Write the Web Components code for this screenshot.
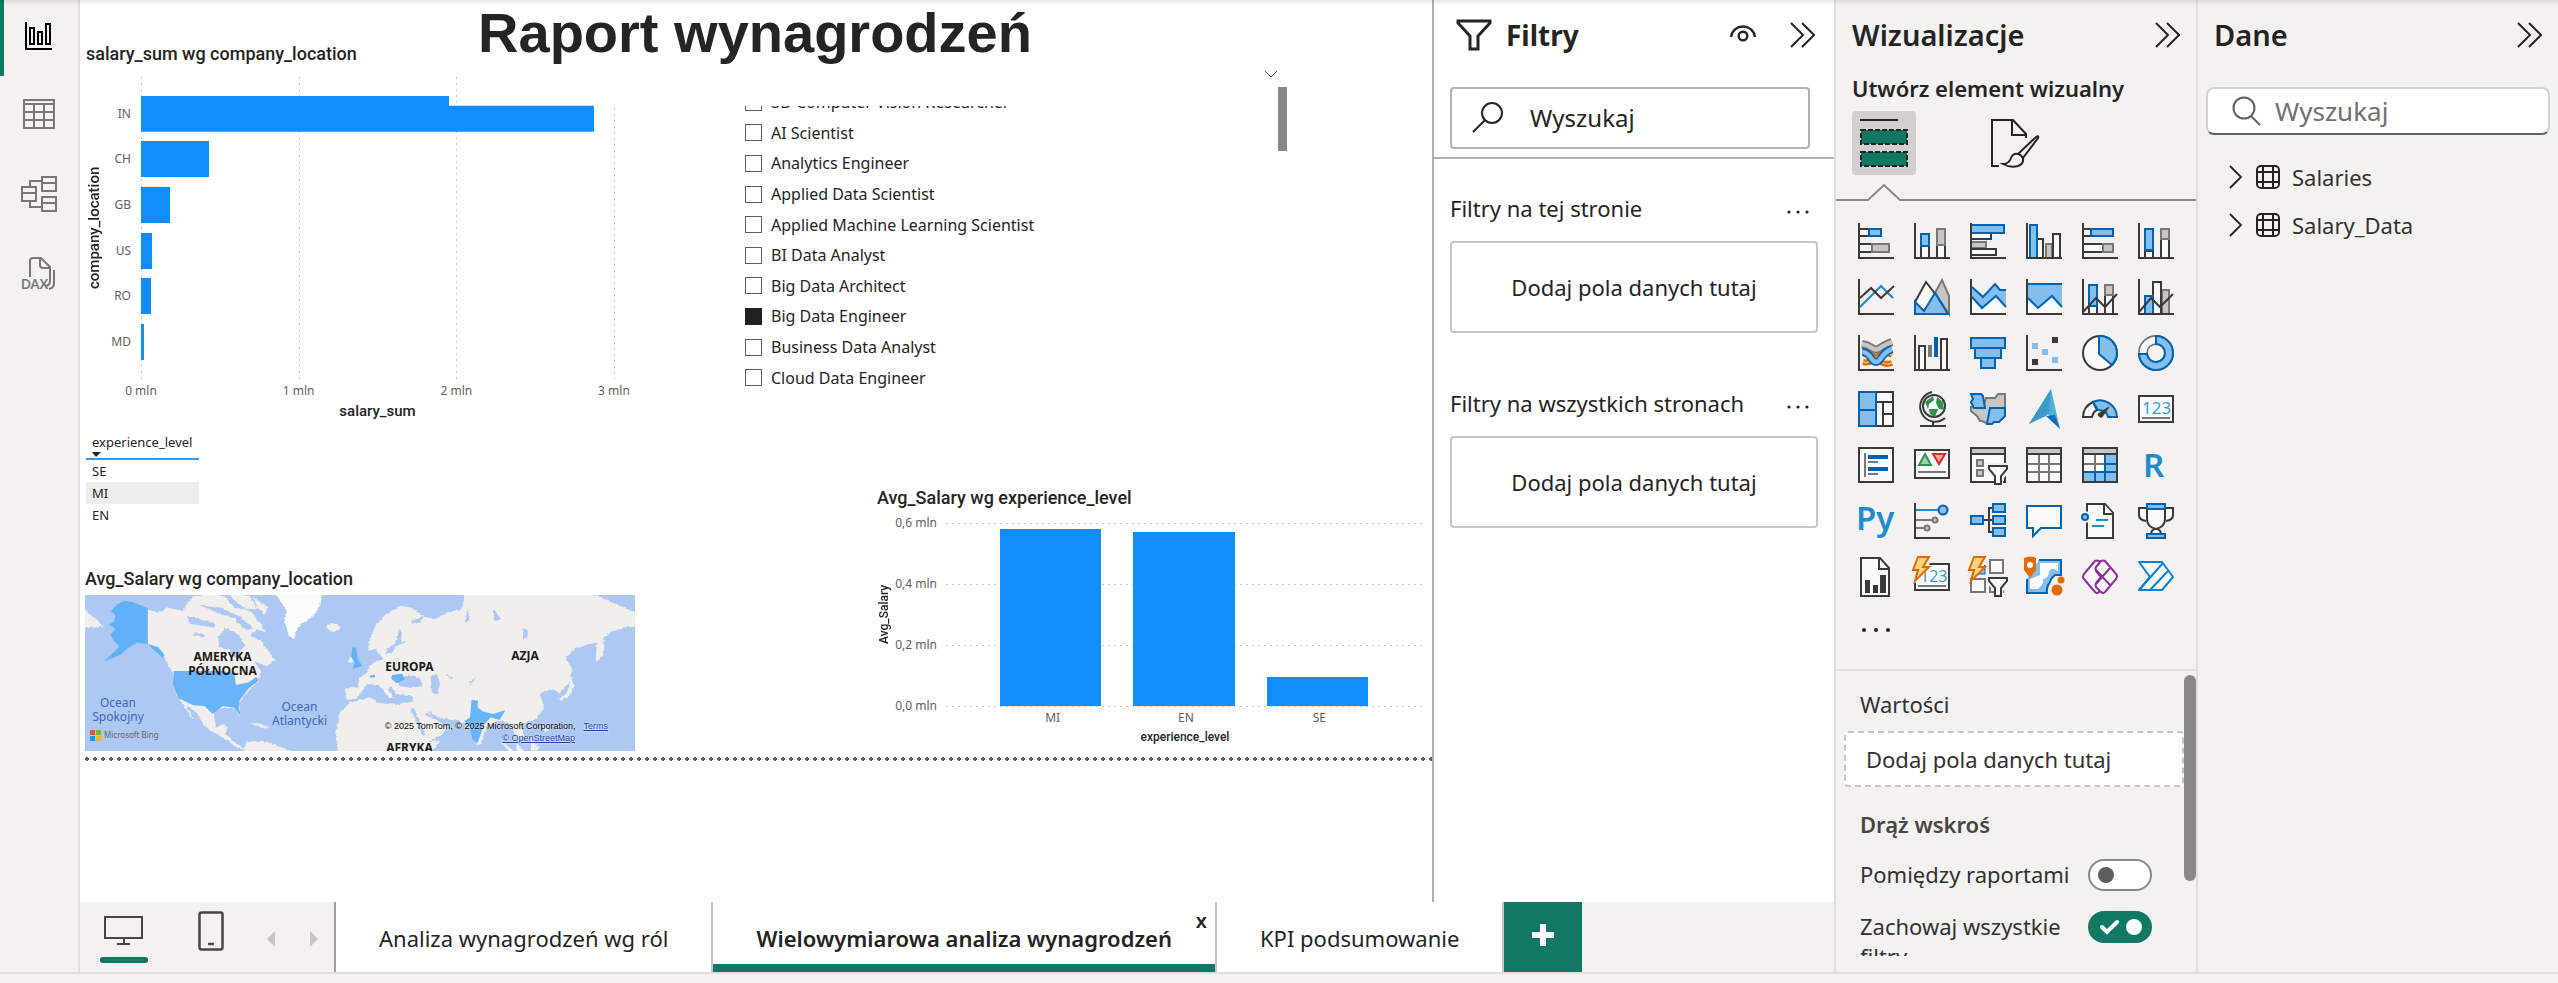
<!DOCTYPE html>
<html lang="pl">
<head>
<meta charset="utf-8">
<title>Raport wynagrodzeń</title>
<style>
html, body { margin: 0; height: 100%; }
body { font: 22px/30px "Noto Sans", "Open Sans", sans-serif; color: #252423; background: #f3f2f1; overflow: hidden; }
</style>
</head>
<body>
<report-app></report-app>
<script>
const BASE = `*, *::before, *::after { box-sizing: border-box; }
h1, h2, h3, p, ul { margin: 0; padding: 0; font-weight: inherit; font-size: inherit; }
ul { list-style: none; }
button { font: inherit; color: inherit; background: none; border: 0; padding: 0; margin: 0; cursor: pointer; display: flex; align-items: center; justify-content: center; }
svg { display: block; }
`;
function define(name, css, html, setup) {
  const template = document.createElement('template');
  customElements.define(name, class extends HTMLElement {
    connectedCallback() {
      if (this.shadowRoot) return;
      template.innerHTML = `<style>${BASE}${css}</style>${typeof html === 'function' ? html(this) : html}`;
      this.attachShadow({ mode: 'open' }).append(template.content.cloneNode(true));
      if (setup) setup(this);
    }
  });
}
const CHEVRONS = `<svg width="26" height="26" viewBox="0 0 26 26" fill="none" stroke="#252423" stroke-width="2"><path d="M2 1l12 12L2 25M13 1l12 12-12 12"/></svg>`;

/* ---------- left rail ---------- */
define('view-rail', `
:host { display: flex; flex-direction: column; width: 80px; border-right: 2px solid #e1dfdd; background: #f3f2f1; }
button { height: 80px; border-left: 4px solid transparent; padding: 0 4px 4px 0; }
button.on { border-color: #117865; height: 76px; }
nav { display: flex; flex-direction: column; }
`, `<nav aria-label="Widoki">
<button class="on" aria-label="Widok raportu"><svg width="28" height="28" viewBox="0 0 28 28" fill="none" stroke="#000" stroke-width="2"><path d="M1 0v27h26M5 6h4v16H5zM13 10h4v12h-4zM21 2h4v20h-4z"/></svg></button>
<button aria-label="Widok tabeli"><svg width="32" height="30" viewBox="0 0 32 30" fill="none" stroke="#797775" stroke-width="2"><path d="M1 1h30v28H1zM1 5h30M1 13h30M1 21h30M11 5v24M21 5v24"/></svg></button>
<button aria-label="Widok modelu"><svg width="36" height="36" viewBox="0 0 36 36" fill="none" stroke="#797775" stroke-width="2"><path d="M1 11h14v14H1zM1 17h14M21 1h14v14H21zM21 7h14M21 21h14v14H21zM21 27h14M9 11V5h12M9 25v6h12"/></svg></button>
<button aria-label="Widok zapytań DAX"><svg width="36" height="34" viewBox="0 0 36 34" fill="none" stroke="#797775" stroke-width="2"><path d="M9 20V4q0-3 3-3h8l9 9v14q0 4-4 5M19 1v7q0 3 3 3h7M33 13v13q0 5-5 6"/><text x="0" y="32" font-family="Lato, sans-serif" font-weight="700" font-size="13" fill="#797775" stroke="none">DAX</text></svg></button>
</nav>`);

/* ---------- bar chart ---------- */
define('bar-chart', `
:host { display: grid; grid-template-columns: 16px 29px 10px minmax(0, 473fr) 22fr; grid-template-rows: 35px 302px 22px 20px; }
h2 { grid-column: 1 / -1; font: 500 18px/24px Roboto, sans-serif; }
.y { writing-mode: vertical-rl; transform: rotate(180deg); text-align: center; font: 500 15px/16px Roboto, sans-serif; }
.cats { display: grid; grid-auto-rows: 1fr; padding: 14px 0; font-size: 12px; line-height: 16px; color: #605e5c; text-align: right; align-items: center; }
.plot { grid-column: 4; display: grid; }
.plot > * { grid-area: 1 / 1; }
.lines { display: flex; justify-content: space-between; margin-right: -1px; }
.lines i { width: 1px; background: repeating-linear-gradient(#c8c6c4 0 2px, transparent 2px 6px); }
.lines i:last-child { margin-top: 31px; }
.bars { display: grid; grid-auto-rows: 1fr; align-items: center; padding: 14px 0; }
.bars b { height: 36px; background: #118dff; width: calc(var(--v) * 100% / 473); }
.bars b:first-child { clip-path: polygon(0 0, 68% 0, 68% 10px, 100% 10px, 100% 100%, 0 100%); }
.ticks { grid-column: 4; display: flex; justify-content: space-between; font-size: 12px; line-height: 24px; color: #605e5c; }
.ticks span { width: 0; display: flex; justify-content: center; white-space: nowrap; }
.x { grid-column: 4; text-align: center; font: 500 15px/20px Roboto, sans-serif; }
`, () => {
  const rows = [['IN', 453], ['CH', 68], ['GB', 29], ['US', 11], ['RO', 10], ['MD', 3]];
  return `<h2>salary_sum wg company_location</h2><div class="y">company_location</div>
<div class="cats">${rows.map(r => `<span>${r[0]}</span>`).join('')}</div>
<div class="plot"><div class="lines"><i></i><i></i><i></i><i></i></div><div class="bars">${rows.map(r => `<b style="--v:${r[1]}"></b>`).join('')}</div></div>
<div class="ticks"><span>0 mln</span><span>1 mln</span><span>2 mln</span><span>3 mln</span></div><div class="x">salary_sum</div>`;
});

/* ---------- experience table ---------- */
define('level-table', `
:host { display: block; }
table { width: 113px; border-collapse: collapse; font-size: 13px; line-height: 18px; }
th { font-weight: 400; text-align: left; padding: 0 0 0 6px; height: 28px; border-bottom: 2px solid #3599f8; }
th svg { margin-top: 1px; }
td { padding: 2px 6px; height: 22px; }
tr.alt td { background: #ededed; }
`, `<table><thead><tr><th scope="col">experience_level<svg width="9" height="5" viewBox="0 0 9 5"><path d="M0 0h9L4 5z" fill="#252423"/></svg></th></tr></thead>
<tbody><tr><td>SE</td></tr><tr class="alt"><td>MI</td></tr><tr><td>EN</td></tr></tbody></table>`);

/* ---------- map ---------- */
define('map-visual', `
:host { display: block; }
h2 { font: 500 18px/24px Roboto, sans-serif; margin-bottom: 4px; }
.map { position: relative; height: 156px; overflow: hidden; background: #adc8f2; }
.map > svg { width: 100%; height: 100%; }
.l { position: absolute; text-align: center; font-size: 12px; line-height: 14px; transform: translate(-50%, -50%); white-space: nowrap; }
.c { font-weight: 700; color: #1b1a19; }
.o { color: #4166bd; }
.logo { position: absolute; left: 5px; bottom: 10px; display: flex; gap: 3px; align-items: center; font-size: 8px; line-height: 12px; color: #666; }
.terms { position: absolute; right: 27px; bottom: 18px; font: 9px/14px "Liberation Sans", sans-serif; color: #000; display: flex; gap: 8px; text-shadow: 0 0 2px #fff; }
.osm { position: absolute; right: 60px; bottom: 6px; font: 9px/14px "Liberation Sans", sans-serif; text-shadow: 0 0 2px #fff; }
a { color: #2a3f9e; }
`, `<h2>Avg_Salary wg company_location</h2>
<div class="map">
<svg viewBox="27 105 1487 468" preserveAspectRatio="none" role="img" aria-label="Mapa świata">
<defs><filter id="coast" x="-5%" y="-5%" width="110%" height="110%"><feTurbulence baseFrequency="0.08" numOctaves="2" seed="4"/><feDisplacementMap in="SourceGraphic" scale="8" xChannelSelector="R" yChannelSelector="G"/></filter></defs>
<g filter="url(#coast)" fill="#f0efeb">
<path d="M190 145l35 10 25-15 40 10 10-20 20-25h80l30 35 40 10 30 40 15 25-25-10-20 20 30 15 40 60-25 15-35-15 20 30-5 30-25 25-25 35-2 20 2 30-15-25-30-5-28 10 3 30 5 20 20-10 10 10-5 20 25 25 20 15 15 12-25-10-40-30-30-20-25-20-20-40-25-15 20 40-10-10-20-35-15-25-10-65-20-40-20-35-35-20z"/>
<path d="M455 573l5-28 20-5 40 5 40 15 30 20zM470 487l25 0 30 14-15 2zM20 145l40 35 15 18-55 4z"/>
<path d="M340 100h40v20h-40zM410 100l60 5 20 40-30 0zM480 110l40 30-10 20-20-20z"/>
<path fill="#fbfbfa" d="M540 95h128l-8 40-18 30-42 35-10 35-15-10-10-45 5-30-15-25z"/>
<ellipse cx="697" cy="200" rx="17" ry="12"/>
<path d="M795 235l15-40 30-35 40-25 30 5 25 25 35 10 35-20 40-8 5-42 25-15h260l75 15 60 30 54 25v35l-40 5-40 15-25 30-35 5-35 15-25 25 20 40-10 35-28 35-17-15-25 10-10 5 12 40-22 35-40 15 8 35-15 10-28-50-25-5-30 15-20 60-10-5-20-55-30-15-30-5-40-5-10-15-12 5 47 28 15 12-15 23-50 28-15-25-35-65-10-32 35-8-5-15-40-5-17-22-10 8 17 22-10 5-30-40-30-5-20 30-10 15-27 2-2-32 33-5 3-25 22-20 12-25 30-15-20-30-20 5z"/>
<path d="M715 455l25-30 60-15 15 15 35 5 50 5 15 45 20 65 50-5-30 45H712l-9-65z"/>
<path d="M740 290l8-4 0 18-12 2zM1405 305l3-55 22-12-4 45zM1340 345l8 30-12 30-25 15-5-6 22-18z"/>
<path d="M1190 545l25 28h-20zM1150 540l40 35h-20zM1230 535l25 30-25 8zM1265 485l12 25-10 2z"/>
<g fill="#adc8f2"><path d="M385 230l20-28 35 20 18 30-14 18 2 26-16-4-15-24-28-8zM300 165l70 20 10 16-70-12zM330 130l70 15 50 25-8 8-60-22zM430 160l50 40-15 10-30-25zM320 215l30 8-4 6-26-4z"/>
<path d="M845 262l22-18 6-38 8 8-2 30 22-4-30 12-18 26-16 0zM905 180l35-12-8 16-22 6zM875 355l25-12 30 10 8 22-30 6-34-6zM958 348l18-6 8 22-4 40-18-10-2-28zM1210 205l12 4-2 24-12 4zM1082 345l-12 26-5-4zM1000 345l20 4-4 6zM905 445l10 0 30 75-8 6zM955 452l25 18-10 8zM1060 140l6 40-14 6zM1130 145l20 30-20 6zM1225 268l-12 18-4-8z"/></g>
</g>
<g fill="#58adfb" fill-opacity=".9">
<path d="M197 145l-40-18-22-5-20 10-18 22 12 12-3 18-14 10 18 12-14 18 6 14 18 22-20 22-22 22 45-20 20-20 24-16 30 4 28 10 17 22-4 10-22-22-19-20z"/>
<path d="M267 333h130l33 6 5 36 35-8 20-16 7 10-27 24-25 36-2 20 5 28-18-26-30-5-28 24-22-24-30-2-40-21-15-42z"/>
<path d="M750 262l10 2 4 34 13 20-27 8 7-20-10-14zM857 345l28-4 6 18-21 11-15-14zM796 347l14-3 2 6-12 4z"/>
<path d="M1072 420l18 2-2 20 14 12 28 8 34-12-16 30-24-8-18 22-18 56-14-14-6-36-16-16 16-12z"/></g>
</svg>
<div class="l c" style="left:25%;top:44%">AMERYKA<br>PÓŁNOCNA</div><div class="l c" style="left:59%;top:46%">EUROPA</div><div class="l c" style="left:80%;top:39%">AZJA</div><div class="l c" style="left:59%;top:98%">AFRYKA</div>
<div class="l o" style="left:6%;top:74%">Ocean<br>Spokojny</div><div class="l o" style="left:39%;top:76%">Ocean<br>Atlantycki</div>
<div class="logo"><svg width="11" height="11" viewBox="0 0 11 11"><path fill="#f25022" d="M0 0h5v5H0z"/><path fill="#7fba00" d="M6 0h5v5H6z"/><path fill="#00a4ef" d="M0 6h5v5H0z"/><path fill="#ffb900" d="M6 6h5v5H6z"/></svg>Microsoft Bing</div>
<div class="terms"><span>© 2025 TomTom, © 2025 Microsoft Corporation,</span><a href="#terms">Terms</a></div>
<a class="osm" href="#osm">© OpenStreetMap</a>
</div>`);

/* ---------- slicer ---------- */
define('job-slicer', `
:host { display: grid; grid-template-columns: minmax(0, 1fr) 9px; width: 542px; max-width: 100%; }
.exp { grid-column: 1; justify-self: end; height: 15px; align-items: flex-start; }
.clip { grid-area: 3 / 1; display: flex; flex-direction: column; justify-content: flex-end; height: 287px; overflow: hidden; }
:host { grid-template-rows: 17px 19px auto; }
ul { flex: none; height: 306px; display: grid; grid-auto-rows: 1fr; }
li { display: flex; align-items: center; }
label { display: flex; align-items: center; gap: 9px; font-size: 16px; line-height: 22px; }
input { appearance: none; margin: 0; width: 17px; height: 17px; border: 1px solid #605e5c; background: #fff; }
input:checked { background: #212121; border-color: #212121; }
.bar { grid-area: 2 / 2 / 4 / 3; height: 64px; background: #8a8886; }
`, () => `<button class="exp" aria-label="Rozwiń"><svg width="14" height="8" viewBox="0 0 14 8" fill="none" stroke="#605e5c"><path d="M1 1l6 6 6-6"/></svg></button>
<div class="clip"><ul>${['3D Computer Vision Researcher', 'AI Scientist', 'Analytics Engineer', 'Applied Data Scientist', 'Applied Machine Learning Scientist', 'BI Data Analyst', 'Big Data Architect', 'Big Data Engineer', 'Business Data Analyst', 'Cloud Data Engineer'].map(t => `<li><label><input type="checkbox"${t === 'Big Data Engineer' ? ' checked' : ''}>${t}</label></li>`).join('')}</ul></div><div class="bar"></div>`);

/* ---------- column chart ---------- */
define('column-chart', `
:host { display: grid; width: 547px; max-width: 100%; grid-template-columns: 14px 46px 9px minmax(0, 1fr); grid-template-rows: 37px 183px 24px 14px; }
h2 { grid-column: 1 / -1; font: 500 18px/24px Roboto, sans-serif; }
.y { writing-mode: vertical-rl; transform: rotate(180deg); text-align: center; font: 500 12px/14px Roboto, sans-serif; }
.vals { display: flex; flex-direction: column; justify-content: space-between; text-align: right; font-size: 12px; color: #605e5c; }
.vals span { height: 0; display: flex; align-items: center; justify-content: flex-end; }
.plot { grid-column: 4; display: grid; }
.plot > * { grid-area: 1 / 1; }
.lines { display: flex; flex-direction: column; justify-content: space-between; margin-bottom: -1px; }
.lines i { height: 1px; background: repeating-linear-gradient(90deg, #c8c6c4 0 2px, transparent 2px 6px); }
.bars, .ticks { display: grid; grid-auto-flow: column; grid-auto-columns: 1fr; padding: 0 40px 0 38px; justify-items: center; }
.bars { align-items: end; }
.bars b { width: 76%; height: var(--v); background: #118dff; }
.ticks { grid-column: 4; font-size: 12px; line-height: 24px; color: #605e5c; padding: 0 38px 0 40px; }
.x { grid-column: 4; text-align: center; font: 500 12px/14px Roboto, sans-serif; }
`, `<h2>Avg_Salary wg experience_level</h2><div class="y">Avg_Salary</div>
<div class="vals"><span>0,6 mln</span><span>0,4 mln</span><span>0,2 mln</span><span>0,0 mln</span></div>
<div class="plot"><div class="lines"><i></i><i></i><i></i><i></i></div><div class="bars"><b style="--v:97%"></b><b style="--v:95%"></b><b style="--v:16%"></b></div></div>
<div class="ticks"><span>MI</span><span>EN</span><span>SE</span></div><div class="x">experience_level</div>`);

/* ---------- canvas ---------- */
define('report-canvas', `
:host { display: block; background: #fff; overflow: hidden; min-width: 0; }
.page { display: grid; grid-template-columns: minmax(0, 550fr) minmax(0, 679fr); column-gap: 109px; grid-template-rows: 42px auto; padding: 0 8px 0 6px; }
h1 { grid-column: 1 / -1; text-align: center; font: 700 56px/66px "Liberation Sans", Arial, sans-serif; white-space: nowrap; }
.left, .right { display: flex; flex-direction: column; }
.right { padding-top: 28px; }
level-table { margin-top: 10px; }
map-visual { margin: 41px 1px 0 -1px; }
column-chart { margin-top: 93px; align-self: flex-end; }
.edge { margin: 6px 0 0 3px; height: 4px; background: radial-gradient(circle, #605e5c 2px, transparent 2px) 0 0 / 8px 4px repeat-x; }
`, `<div class="page"><h1>Raport wynagrodzeń</h1>
<div class="left"><bar-chart></bar-chart><level-table></level-table><map-visual></map-visual></div>
<div class="right"><job-slicer></job-slicer><column-chart></column-chart></div></div><div class="edge"></div>`);

/* ---------- filters ---------- */
define('filter-well', `
:host { display: block; }
header { display: flex; justify-content: space-between; align-items: center; height: 30px; margin-bottom: 18px; }
header button { margin-right: 8px; height: 30px; align-items: center; }
.drop { height: 92px; border: 2px solid #c8c6c4; border-radius: 4px; display: flex; align-items: center; justify-content: center; }
`, `<header><h3><slot name="label"></slot></h3><button aria-label="Więcej opcji"><svg width="24" height="18" viewBox="0 0 24 18" fill="#252423"><circle cx="3" cy="13" r="1.6"/><circle cx="12" cy="13" r="1.6"/><circle cx="21" cy="13" r="1.6"/></svg></button></header><div class="drop"><slot></slot></div>`);

define('filter-pane', `
:host { display: flex; flex-direction: column; width: 402px; border-left: 2px solid #b3b0ad; background: #fff; }
.head { display: flex; align-items: center; height: 70px; padding: 0 19px 0 22px; }
h2 { font-size: 28px; line-height: 36px; font-weight: 700; margin: 0 auto 0 14px; }
.head button + button { margin-left: 32px; }
.find { display: flex; align-items: center; gap: 26px; height: 62px; margin: 17px 24px 8px 16px; padding: 0 20px; border: 2px solid #b3b0ad; border-radius: 4px; }
input { flex: 1; min-width: 0; border: 0; outline: 0; padding: 0; font-family: inherit; font-size: 24px; line-height: 32px; color: #252423; background: none; }
input::placeholder { color: #252423; opacity: 1; }
.wells { display: flex; flex-direction: column; gap: 55px; border-top: 2px solid #b3b0ad; padding: 34px 16px 0; }
`, `<div class="head"><svg width="36" height="32" viewBox="0 0 36 32" fill="none" stroke="#252423" stroke-width="3"><path d="M2 2h32v2L22 17v13h-8V17L2 4z"/></svg><h2>Filtry</h2>
<button aria-label="Pokaż filtry"><svg width="28" height="22" viewBox="0 0 28 22" fill="none" stroke="#252423" stroke-width="2.4"><path d="M2 13C4-1 24-1 26 13"/><circle cx="14" cy="12" r="4.3"/></svg></button><button aria-label="Zwiń">${CHEVRONS}</button></div>
<label class="find"><svg width="32" height="32" viewBox="0 0 32 32" fill="none" stroke="#252423" stroke-width="2"><circle cx="20" cy="11" r="10"/><path d="M13 18L1 30"/></svg><input type="text" placeholder="Wyszukaj" aria-label="Wyszukaj w filtrach"></label>
<div class="wells"><filter-well><span slot="label">Filtry na tej stronie</span>Dodaj pola danych tutaj</filter-well><filter-well><span slot="label">Filtry na wszystkich stronach</span>Dodaj pola danych tutaj</filter-well></div>`);

/* ---------- page tabs ---------- */
define('page-tabs', `
:host { display: flex; height: 70px; background: #f3f2f1; }
.layout { position: relative; width: 74px; padding-bottom: 12px; }
.layout.on { margin-left: 12px; width: 64px; margin-right: 18px; }
.layout.on::after { content: ""; position: absolute; left: 8px; right: 8px; bottom: 9px; height: 6px; border-radius: 3px; background: #117865; }
.arrow { width: 40px; margin-left: 3px; padding: 4px 0 0; }
.tab { padding: 2px 43px 0; background: #fff; border-right: 2px solid #c8c6c4; white-space: nowrap; height: 70px; }
.first { border-left: 2px solid #a19f9d; }
.wrap { position: relative; display: flex; }
.on.tab { font-weight: 600; box-shadow: inset 0 -8px #117865; }
.close { position: absolute; right: 10px; top: 8px; font-size: 20px; line-height: 22px; font-weight: 600; }
.add { width: 78px; background: #117865; padding-bottom: 4px; }
`, `<button class="layout on" aria-label="Układ pulpitu"><svg width="40" height="30" viewBox="0 0 40 30" fill="none" stroke="#484644" stroke-width="2"><path d="M1 1h37v21H1zM20 22v5M13 28h13" /></svg></button>
<button class="layout phone" aria-label="Układ mobilny"><svg width="26" height="40" viewBox="0 0 26 40" fill="none" stroke="#484644" stroke-width="2.5"><rect x="1.5" y="1.5" width="23" height="37" rx="2"/><path d="M10 33h6"/></svg></button>
<button class="arrow" aria-label="Poprzednia strona"><svg width="8" height="16" viewBox="0 0 8 16"><path d="M8 0v16L0 8z" fill="#c8c6c4"/></svg></button>
<button class="arrow" aria-label="Następna strona"><svg width="8" height="16" viewBox="0 0 8 16"><path d="M0 0v16l8-8z" fill="#c8c6c4"/></svg></button>
<button class="tab first">Analiza wynagrodzeń wg ról</button>
<div class="wrap"><button class="tab on">Wielowymiarowa analiza wynagrodzeń</button><button class="close" aria-label="Usuń stronę">x</button></div>
<button class="tab">KPI podsumowanie</button>
<button class="add" aria-label="Nowa strona"><svg width="22" height="22" viewBox="0 0 22 22"><path d="M8 0h6v8h8v6h-8v8H8v-8H0V8h8z" fill="#fff"/></svg></button>`);

/* ---------- visual gallery icons, 36px grid ---------- */
const AX = '<path class="k" d="M1 0v35h35"/>';
const box = (c, x, y, w, h) => `<rect class="${c}" x="${x}" y="${y}" width="${w}" height="${h}"/>`;
const BOLT = '<path d="M4-2h11L9 8h6L1 22l3-11H-1z" fill="#fcd581" stroke="#e06c00" stroke-width="2"/>';
const FUNNEL = '<path d="M16 16h24v8l-7 8v8h-8v-8l-9-8z" fill="#f3f2f1"/><path class="kw" d="M19 19h18v3l-6 7v8h-6v-8l-6-7z"/>';
const ICONS = [
 ['Skumulowany wykres słupkowy', box('kw',1,6,10,7)+box('bf',11,6,12,7)+box('kw',1,21,13,8)+box('gf',14,21,17,8)+AX],
 ['Skumulowany wykres kolumnowy', box('kw',7,23,8,12)+box('bf',7,11,8,12)+box('kw',23,21,8,14)+box('gf',23,6,8,16)+AX],
 ['Grupowany wykres słupkowy', box('kw',1,10,20,6)+box('gf',1,19,15,6)+box('kw',1,26,25,6)+box('bf',1,2,33,8)+AX],
 ['Grupowany wykres kolumnowy', box('kw',11,16,6,19)+box('gf',20,21,6,14)+box('kw',27,11,7,24)+box('bf',4,2,7,33)+AX],
 ['100% słupkowy', box('kw',1,6,8,7)+box('bf',9,6,22,7)+box('kw',1,21,20,8)+box('gf',21,21,10,8)+AX],
 ['100% kolumnowy', box('kw',7,28,8,7)+box('bf',7,6,8,21)+box('kw',23,15,8,20)+box('gf',23,6,8,10)+AX],
 ['Liniowy', '<path d="M2 28L23 7l12 12" fill="none" stroke="#1f8ccd" stroke-width="2.2"/><path class="k" d="M2 19L13 9l10 10L36 7"/>'+AX],
 ['Warstwowy', '<path class="gf" d="M21 14l7-13 7 16v18z"/><path class="kw" d="M1 34V23L12 3l10 13-10 18z"/><path class="bf" d="M1 35V23l9 9 11-18 13 21z"/>'],
 ['Skumulowany warstwowy', '<path fill="#fafafa" d="M2 18l10 11 14-12 10 10v8H2z"/><path fill="#83beec" d="M2 8l11 10L25 5l5 6h6v17L26 17 12 29 2 18z"/><path class="b" d="M2 8l11 10L25 5l5 6h6M2 18l10 11 14-12 10 11"/>'+AX],
 ['100% warstwowy', '<path fill="#fafafa" d="M2 18l10 11 14-12 10 10v8H2z"/><path fill="#83beec" d="M2 5h34v23L26 17 12 29 2 19z"/><path class="b" d="M2 5h34M2 19l10 10 14-12 10 11"/>'+AX],
 ['Liniowy i skumulowany kolumnowy', box('kw',7,27,8,8)+box('bf',7,6,8,21)+box('kw',23,16,8,19)+box('gf',23,6,8,10)+AX+'<path class="k" d="M1 33l13-14 9 9 12-13"/>'],
 ['Liniowy i grupowany kolumnowy', box('gf',24,11,7,24)+box('kw',15,3,8,32)+box('bf',7,17,8,18)+AX+'<path class="k" d="M1 33l12-14 9 9 13-13"/>'],
 ['Wstążkowy', '<path d="M5 19q7-2 14 5t15 4M5 27q8 2 14-5t15-2" fill="none" stroke="#e06c00" stroke-width="6"/><path d="M5 19q7-2 14 5t15 4M5 27q8 2 14-5t15-2" fill="none" stroke="#ffb95e" stroke-width="1.5"/><path d="M4 9q6 1 10 4t8 0 12-6" fill="none" stroke="#797775" stroke-width="8"/><path d="M4 9q6 1 10 4t8 0 12-6" fill="none" stroke="#c8c6c4" stroke-width="4.5"/><path d="M4 17q5 0 9 6 5 8 10 0 5-7 11-9" fill="none" stroke="#0063b1" stroke-width="8"/><path d="M4 17q5 0 9 6 5 8 10 0 5-7 11-9" fill="none" stroke="#83beec" stroke-width="4.5"/>'+AX],
 ['Kaskadowy', box('kw',5,11,6,24)+'<path fill="#797775" d="M14 10h4v12h-4z"/><path fill="#0063b1" d="M20 2h4v20h-4z"/>'+box('kw',27,4,6,31)+AX],
 ['Lejkowy', box('bf',1,3,34,10)+box('bf',5,13,26,10)+box('bf',11,23,14,10)],
 ['Punktowy', '<path fill="#83beec" d="M6 8h6v6H6zM16 14h6v6h-6zM26 22h6v6h-6z"/><path fill="#3b3a39" d="M26 2h6v6h-6zM6 24h6v6H6z"/>'+AX],
 ['Kołowy', '<circle class="kw" cx="18" cy="18" r="17"/><path class="bf" d="M17 1a17 17 0 0 1 13 29L17 19z"/>'],
 ['Pierścieniowy', '<circle cx="18" cy="18" r="13" fill="none" stroke="#797775" stroke-width="10"/><circle cx="18" cy="18" r="13" fill="none" stroke="#fafafa" stroke-width="6.5"/><path class="bf" d="M18 1a17 17 0 1 1-17 18h8a9 9 0 1 0 9-10z"/>'],
 ['Mapa drzewa', box('kw',18,1,17,34)+'<path class="k" d="M18 11h17M25 11v24M25 23h10"/>'+box('bf',1,1,17,18)+box('bf',1,19,17,16)],
 ['Mapa', '<circle cx="20" cy="15" r="11" class="kw"/><path fill="#2f9249" d="M11 11l8-6 1 4-5 4-1 5zM23 6l6 5 1 8-5-1-3-6zM15 18h9l-3 8-5-3z"/><path class="k" d="M18 1a15 15 0 1 0 13 26M19 30v5M6 35h26"/>'],
 ['Kartogram', '<path class="gf" d="M16 7h9l3-4h7v14l-4 4v6l-13 6-6-3-2 0-3-5-6-5V16h12z"/><path class="bf" d="M1 3h10l2 2 2 12H4L1 11l2-3zM20 17h15v8l-6 6h-5l-2 2h-5l2-11z"/>'],
 ['Azure Maps', '<path fill="#50b0d8" d="M25-2l9 40-13-16L3 33z"/><path fill="#3c9aca" d="M25-2l-2 24-3 3L3 33z"/><path fill="#0f6ebf" d="M20 25l9-1 5 14z"/>'],
 ['Miernik', '<path class="kw" d="M1 26a17 17 0 0 1 10-15l4 8q-4 2-5 7z"/><path class="bf" d="M11 11a17 17 0 0 1 24 15h-9q-1-7-10-7z"/><path d="M27 16L20 26a3 3 0 0 1-4-3z" fill="#3b3a39" stroke="#3b3a39"/>'],
 ['Karta', box('kw',1,5,34,26)+'<text x="4" y="23" font-size="17" fill="#429ad6">123</text><path class="g" d="M4 27h28"/>'],
 ['Karta z wieloma wierszami', box('kw',1,1,34,34)+'<path class="g" d="M7 6v24M10 15h10M10 27h10"/><path d="M10 10h20M10 22h20" stroke="#0063b1" stroke-width="4"/>'],
 ['KPI', box('kw',1,3,34,28)+'<path d="M5 18h12L11 7z" fill="#9ad5a8" stroke="#2f9249" stroke-width="2"/><path d="M19 7h12l-6 10z" fill="#f7a6a6" stroke="#dc2b1e" stroke-width="2"/><path class="g" d="M4 25h28"/>'],
 ['Fragmentator', box('kw',1,1,34,34)+box('kl',1,1,34,6)+box('gf',7,13,6,6)+box('gf',7,23,6,6)+FUNNEL],
 ['Tabela', box('kw',1,1,34,34)+'<path class="g" d="M1 17h34M1 25h34M13 7v28M23 7v28"/>'+box('k',1,1,34,34)+box('kl',1,1,34,6)],
 ['Macierz', box('kw',1,1,34,34)+'<path fill="#83beec" d="M23 7h12v28H1V25h22z"/><path class="g" d="M1 17h22M13 7v18"/><path class="b" d="M23 7v28M1 25h34M13 25v10M23 17h12"/>'+box('k',1,1,34,34)+box('kl',1,1,34,6)],
 ['Element wizualny skryptu języka R', '<text x="5" y="30" font-size="33" font-weight="600" fill="#1f8ccd">R</text>'],
 ['Element wizualny Python', '<text x="-2" y="27" font-size="33" font-weight="600" fill="#1f8ccd">Py</text>'],
 ['Kluczowe elementy wpływające', '<path d="M2 7h22" stroke="#1f8ccd" stroke-width="2"/><circle class="bf" cx="29" cy="7" r="4.5"/><path class="g" d="M2 17h16M2 25h9"/><circle class="gf" cx="21" cy="17" r="2.5"/><circle class="gf" cx="13" cy="25" r="2.5"/>'+AX],
 ['Drzewo dekompozycji', '<path class="k" d="M14 17h8M23 5h-4v24h4M19 17h4"/>'+box('bf',1,13,12,8)+box('bf',23,1,12,8)+box('bf',23,13,12,8)+box('bf',23,25,12,8)],
 ['Pytania i odpowiedzi', '<path d="M1 3h34v22H15l-8 8v-8H1z" fill="#fafafa" stroke="#0063b1" stroke-width="2"/>'],
 ['Narracja', '<path class="kw" d="M5 1h18l8 9v25H5z"/><path class="kw" d="M22 1v10h9"/><path d="M14 17h12M10 23h12" stroke="#1f8ccd" stroke-width="2"/><circle cx="3" cy="14" r="6" fill="#f3f2f1"/><circle class="bf" cx="3" cy="14" r="3"/>'],
 ['Cele', '<path class="kw" d="M9 5H1v7q0 5 7 6M27 5h8v7q0 5-7 6"/><path class="kw" d="M9 4h18v12q0 8-9 10-9-2-9-10zM13 32q0-6 5-6t5 6z"/>'+box('bf',9,1,18,5)+box('bf',9,31,18,4)],
 ['Raport podzielony na strony', '<path class="kw" d="M3-1h19l9 10v28H3z" stroke-width="3"/><path class="k" d="M21 0v10h10"/><path fill="#3b3a39" d="M7 21h5v13H7zM15 26h5v8h-5zM22 16h6v18h-6z"/>'],
 ['Karta (nowa)', box('kw',1,5,34,26)+'<path fill="#f3f2f1" d="M-3-4h23L8 20-3 26z"/><text x="6" y="23" font-size="16" fill="#429ad6">123</text><path class="g" d="M4 27h28"/>'+BOLT],
 ['Fragmentator (nowy)', box('gw',20,1,13,13)+box('gw',1,20,14,13)+box('gw',20,20,13,13)+'<path fill="#83beec" stroke="#0063b1" d="M15 6v9H7z"/>'+BOLT+FUNNEL],
 ['Mapa kształtów', '<path d="M13 1h22v15h-6q-4 3-5 7-4 5-3 11H1V20" fill="#83beec" stroke="#0063b1" stroke-width="2"/><path fill="#fafafa" d="M4 20l10-4V4h18v8q-6-4-9 0 0 7-6 8 1 5-5 10H4z"/><path fill="#e06c00" d="M-2-1q6-3 12 0v12L4 19l-6-8z"/><circle cx="4" cy="6" r="3" fill="#fff"/><circle cx="31" cy="31" r="5.5" fill="#e06c00"/><circle cx="35" cy="21" r="3.5" fill="#e06c00"/>'],
 ['Power Apps', '<g fill="#fafafa" stroke="#8f2d9b" stroke-width="2" stroke-linejoin="round"><path d="M13 2L2 15q-2 3 0 5l11 13q2 2 4 0l4-4V6l-4-4q-2-1-4 0z"/><path d="M19 2L14 8q-1 2 0 4l5 6-5 6q-1 2 0 4l5 5q2 2 4 0l11-13q2-3 0-5L23 2q-2-1-4 0z"/><path d="M14 11l14 15M14 25L28 9" fill="none"/></g>'],
 ['Power Automate', '<g fill="#fafafa" stroke="#0a7fe0" stroke-width="2" stroke-linejoin="round"><path d="M1 3h23l11 15-11 13H1l11-13z"/><path d="M1 31L25 4M12 31L31 11" fill="none"/></g>'],
];
define('visual-gallery', `
:host { display: grid; grid-template-columns: repeat(6, 36px); gap: 20px; padding: 22px 22px 0; }
button { width: 36px; height: 36px; }
svg { overflow: visible; font-family: "Noto Sans", sans-serif; }
.k, .g, .b { fill: none; stroke-width: 2; } .k { stroke: #3b3a39; } .g { stroke: #797775; } .b { stroke: #0063b1; }
.kw, .bf, .gf, .kl, .gw { stroke-width: 2; } .kw { fill: #fafafa; stroke: #3b3a39; } .bf { fill: #83beec; stroke: #0063b1; }
.gf { fill: #c8c6c4; stroke: #797775; } .kl { fill: #c8c6c4; stroke: #3b3a39; } .gw { fill: #fafafa; stroke: #797775; }
`, () => ICONS.map(([n, s]) => `<button aria-label="${n}"><svg width="36" height="36" viewBox="0 0 36 36">${s}</svg></button>`).join('') +
`<button aria-label="Pobierz więcej wizualizacji"><svg width="36" height="36" viewBox="0 0 36 36" fill="#252423"><circle cx="6" cy="15" r="2"/><circle cx="18" cy="15" r="2"/><circle cx="30" cy="15" r="2"/></svg></button>`);

/* ---------- toggle ---------- */
define('toggle-row', `
:host { display: block; height: 32px; }
label { display: grid; grid-template-columns: minmax(0, 1fr) 64px; align-items: start; }
.sw { display: grid; }
.sw > * { grid-area: 1 / 1; }
input { appearance: none; margin: 0; width: 64px; height: 32px; border: 2px solid #8a8886; border-radius: 16px; background: #fff; display: flex; align-items: center; padding: 0 8px; }
input::before { content: ""; width: 16px; height: 16px; border-radius: 50%; background: #605e5c; }
input:checked { background: #117865; border-color: #117865; justify-content: flex-end; }
input:checked::before { background: #fff; }
svg { visibility: hidden; pointer-events: none; margin: 8px 0 0 12px; }
input:checked + svg { visibility: visible; }
`, el => `<label><span><slot></slot></span><span class="sw"><input type="checkbox" role="switch"${el.hasAttribute('checked') ? ' checked' : ''}><svg width="20" height="16" viewBox="0 0 20 16" fill="none" stroke="#fff" stroke-width="4" stroke-linecap="round"><path d="M2 8l5 5L17 3"/></svg></span></label>`);

/* ---------- visualizations ---------- */
define('viz-pane', `
:host { display: flex; flex-direction: column; width: 364px; min-height: 0; border: 2px solid #e1dfdd; border-width: 0 2px; background: #f3f2f1; }
.head { display: flex; align-items: center; justify-content: space-between; height: 70px; padding: 0 16px; flex: none; }
h2 { font-size: 29px; line-height: 38px; font-weight: 600; }
h3 { font-weight: 600; padding: 3px 16px 8px; }
.modes { display: flex; gap: 68px; padding-left: 16px; }
.modes button { width: 64px; height: 64px; border-radius: 4px; }
.modes .on { background: #d2d0ce; }
.notch { height: 26px; border-bottom: 2px solid #8a8886; padding-left: 30px; flex: none; }
.notch svg { margin-top: 8px; }
.fields { position: relative; flex: 1; min-height: 0; margin: 18px 0 16px; border-top: 2px solid #e1dfdd; overflow: hidden; padding-top: 18px; }
p, .fields h4 { margin: 0; padding-left: 24px; color: #323130; }
.drop { margin: 12px 12px 22px 8px; height: 56px; border: 2px dashed #c8c6c4; border-radius: 4px; background: #fff; padding: 0 20px; display: flex; align-items: center; color: #323130; }
.fields h4 { font-weight: 600; font-size: 22px; color: #484644; }
toggle-row { margin: 20px 44px 0 24px; color: #323130; }
.bar { position: absolute; right: 0; top: 4px; width: 12px; height: 206px; border-radius: 6px; background: #8a8886; }
`, `<div class="head"><h2>Wizualizacje</h2><button aria-label="Zwiń">${CHEVRONS}</button></div>
<h3>Utwórz element wizualny</h3>
<div class="modes"><button class="on" aria-label="Utwórz element wizualny"><svg width="48" height="50" viewBox="0 0 48 50"><path d="M0 2h38" stroke="#252423" stroke-width="2"/><g fill="#117865" stroke="#252423" stroke-width="2" stroke-dasharray="5 2"><path d="M1 12h46v14H1zM1 34h46v14H1z"/></g></svg></button>
<button aria-label="Formatowanie"><svg width="50" height="50" viewBox="0 0 50 50" fill="none" stroke="#252423" stroke-width="2"><path d="M8 48H1V2h21l13 14v4M21 2v15h14"/><path fill="#f3f2f1" d="M12 46q6 0 8-6 2-5 7-4l18-17q3-2 2 1L32 40q1 6-5 8-8 2-15-2z"/><path d="M27 36q4 1 5 5"/></svg></button></div>
<div class="notch"><svg width="36" height="18" viewBox="0 0 36 18"><path d="M2 18L18 2l16 16z" fill="#f3f2f1"/><path d="M1 17h1L18 2l16 15h1" fill="none" stroke="#8a8886" stroke-width="2"/></svg></div>
<visual-gallery></visual-gallery>
<div class="fields"><p>Wartości</p><div class="drop">Dodaj pola danych tutaj</div><h4>Drąż wskroś</h4>
<toggle-row>Pomiędzy raportami</toggle-row><toggle-row checked>Zachowaj wszystkie filtry</toggle-row><div class="bar"></div></div>`);

/* ---------- data ---------- */
define('data-pane', `
:host { display: block; width: 360px; background: #f3f2f1; }
.head { display: flex; align-items: center; justify-content: space-between; height: 70px; padding: 0 16px; }
h2 { font-size: 29px; line-height: 38px; font-weight: 600; }
.find { display: flex; align-items: center; gap: 13px; height: 48px; margin: 17px 8px 18px; padding: 0 24px; border: 2px solid #d1d1d1; border-bottom-color: #616161; border-radius: 8px; background: #fff; }
input { flex: 1; min-width: 0; border: 0; outline: 0; padding: 0; font-family: inherit; font-size: 26px; line-height: 34px; background: none; }
input::placeholder { color: #707070; opacity: 1; }
li button { width: 100%; height: 48px; justify-content: flex-start; padding-left: 31px; color: #323130; }
li span { margin-left: 12px; }
li svg + svg { margin-left: 13px; }
`, `<div class="head"><h2>Dane</h2><button aria-label="Zwiń">${CHEVRONS}</button></div>
<label class="find"><svg width="30" height="30" viewBox="0 0 30 30" fill="none" stroke="#616161" stroke-width="2"><circle cx="12" cy="12" r="10.5"/><path d="M19 20l9 9"/></svg><input type="text" placeholder="Wyszukaj" aria-label="Wyszukaj w danych"></label>
<ul>${['Salaries', 'Salary_Data'].map(t => `<li><button><svg width="14" height="24" viewBox="0 0 14 24" fill="none" stroke="#252423" stroke-width="1.8"><path d="M1 1l11 11L1 23"/></svg><svg width="24" height="24" viewBox="0 0 24 24" fill="none" stroke="#252423" stroke-width="2"><rect x="1" y="1" width="22" height="22" rx="4"/><path d="M7 1v22M17 1v22M1 7h22M1 17h22"/></svg><span>${t}</span></button></li>`).join('')}</ul>`);

/* ---------- shell ---------- */
define('report-app', `
:host { display: flex; flex-direction: column; height: 100vh; position: relative; }
.main { flex: 1; min-height: 0; display: flex; }
.center { flex: 1; min-width: 0; display: flex; flex-direction: column; }
.work { flex: 1; min-height: 0; display: flex; }
report-canvas { flex: 1; }
footer { height: 11px; border-top: 2px solid #e1dfdd; background: #f3f2f1; }
:host::before { content: ""; position: absolute; inset: 0 0 auto; height: 6px; background: linear-gradient(rgba(0,0,0,.09), transparent); z-index: 1; pointer-events: none; }
`, `<div class="main"><view-rail></view-rail><div class="center"><div class="work"><report-canvas></report-canvas><filter-pane></filter-pane></div><page-tabs></page-tabs></div><viz-pane></viz-pane><data-pane></data-pane></div><footer></footer>`);
</script>
</body>
</html>
